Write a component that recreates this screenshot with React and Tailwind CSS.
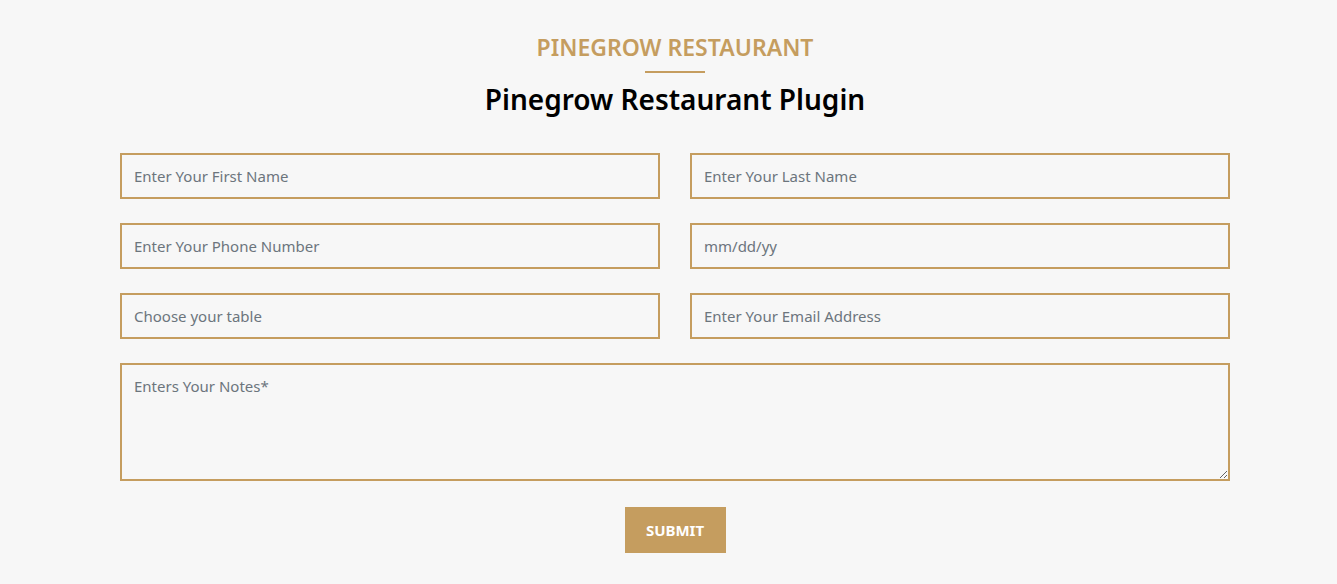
import React from "react";

const field =
  "w-full h-[46px] px-3 bg-transparent border-2 border-[#c59d5f] text-[15px] text-[#495057] placeholder:text-[#6c757d] outline-none";

export default function App() {
  return (
    <div className="min-h-[584px] bg-[#f7f7f7] font-['Noto_Sans',sans-serif] flex justify-center pl-[13px]">
      <div className="w-[1110px] pt-[32px] pb-[31px]">
        <div className="flex flex-col items-center">
          <h3 className="text-[23px] leading-[30px] font-semibold text-[#c59d5f] uppercase">Pinegrow Restaurant</h3>
          <div className="w-[60px] h-[2px] bg-[#c59d5f] mt-[9px]"></div>
          <h2 className="text-[28px] leading-[40px] font-semibold text-black mt-[6px]">Pinegrow Restaurant Plugin</h2>
        </div>
        <form className="mt-[34px]">
          <div className="grid grid-cols-2 gap-x-[30px] gap-y-[24px]">
            <input className={field} placeholder="Enter Your First Name" />
            <input className={field} placeholder="Enter Your Last Name" />
            <input className={field} placeholder="Enter Your Phone Number" />
            <input className={field} placeholder="mm/dd/yy" />
            <input className={field} placeholder="Choose your table" />
            <input className={field} placeholder="Enter Your Email Address" />
            <textarea
              className="col-span-2 w-full h-[118px] px-3 py-[10px] bg-transparent border-2 border-[#c59d5f] text-[15px] text-[#495057] placeholder:text-[#6c757d] outline-none block"
              placeholder="Enters Your Notes*"
            ></textarea>
          </div>
          <div className="flex justify-center mt-[26px]">
            <button type="button" className="w-[101px] h-[46px] bg-[#c59d5f] text-white text-[15px] font-bold uppercase">
              Submit
            </button>
          </div>
        </form>
      </div>
    </div>
  );
}
